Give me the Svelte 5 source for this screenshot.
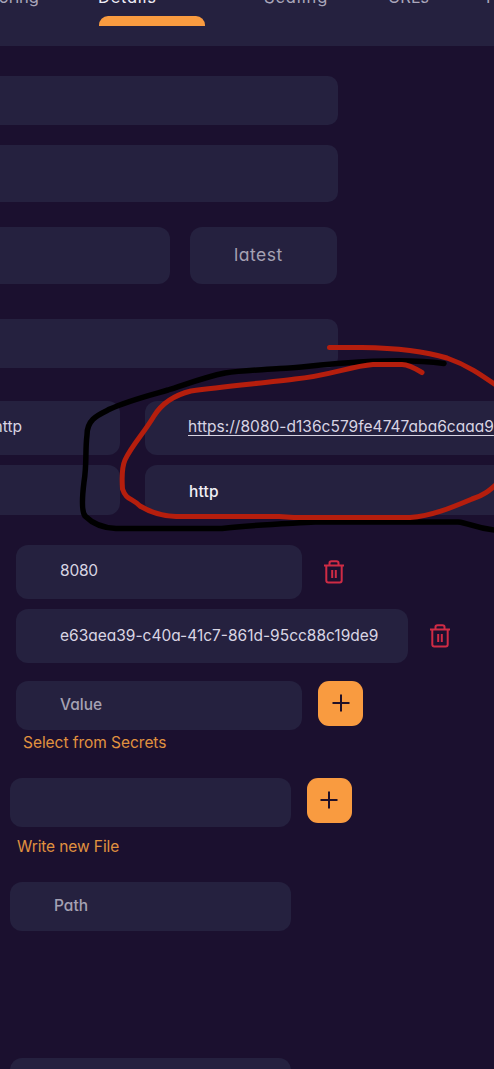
<script>
  const tabs = [
    { id: 'monitoring', label: 'Monitoring' },
    { id: 'details', label: 'Details' },
    { id: 'scaling', label: 'Scaling' },
    { id: 'urls', label: 'URLs' },
    { id: 'more', label: 'P' }
  ];
</script>

{#snippet trash()}
  <svg class="trash" viewBox="0 0 22 24" width="22" height="24" aria-hidden="true">
    <path d="M1 5.5H21M6.5 5V3Q6.5 1.300 8.5 1.300H13.5Q15.5 1.300 15.5 3V5M3.3 6V20.5Q3.3 22.5 5.3 22.5H16.7Q18.7 22.5 18.7 20.5V6M9.200 10V18M12.800 10V18" />
  </svg>
{/snippet}

{#snippet plus()}
  <button class="add" aria-label="Add">
    <svg viewBox="0 0 18 18" width="18" height="18"><path d="M9 .5V17.5M.5 9H17.5" /></svg>
  </button>
{/snippet}

<main>
  <header>
    <nav>
      {#each tabs as tab}
        <div class="tab {tab.id}"><span>{tab.label}</span></div>
      {/each}
    </nav>
    <div class="indicator"></div>
  </header>

  <div class="row name"><div class="field wide"></div></div>
  <div class="row kind"><div class="field wide"></div></div>
  <div class="row image">
    <div class="field repo"></div>
    <div class="field tag muted"><span>latest</span></div>
  </div>
  <div class="row command"><div class="field wide"></div></div>

  <div class="row url">
    <div class="field proto"><span>http</span></div>
    <div class="field link"><a href="#url">https://8080-d136c579fe4747aba6caaa9</a></div>
  </div>
  <div class="row scheme">
    <div class="field proto"></div>
    <div class="field link"><span class="http">http</span></div>
  </div>

  <div class="row port">
    <div class="field value"><span class="t-port">8080</span></div>
    {@render trash()}
  </div>
  <div class="row uuid">
    <div class="field long"><span>e63aea39-c40a-41c7-861d-95cc88c19de9</span></div>
    {@render trash()}
  </div>
  <div class="row new-value">
    <div class="field value muted"><span class="hint">Value</span></div>
    {@render plus()}
  </div>
  <div class="action secrets"><span>Select from Secrets</span></div>
  <div class="row file">
    <div class="field path"></div>
    {@render plus()}
  </div>
  <div class="action write"><span>Write new File</span></div>
  <div class="row file-path"><div class="field path muted"><span class="hint">Path</span></div></div>
  <div class="row last"><div class="field path"></div></div>

  <svg class="ink" viewBox="0 0 494 1069" width="494" height="1069" aria-hidden="true">
    <path class="black" d="M444 363.500C418 360 385 360 345 363C315 365 300 368 280 368.500C262 370 244 370 225 373C205 377 187 384 168 390C147 396 127 401 110 409C98 415 87 419 87 435C85 451 87 464 84 482C82 498 82 512 85 516C92 523 103 528 116 528.500H222C250 525 280 524 315 522H458C470 523 475 529 500 530.500" />
    <path class="red" d="M329.500 347.500H362C395 348 424 351 447 358C467 365 480 374 500 388" />
    <path class="red" d="M422 372.500C413 367 408 364.500 402 364.500H373C351 366 328 376 295 379C265 383 225 386 191 391C175 395 162 403 154 416C144 433 132 445 125 460C121 469 122 480 122.500 489C126 500 132 498 140 506C150 512 162 516 176 516.500H279L294 517.500H410C432 516 453 507 472 499C485 495 490 490 500 481" />
  </svg>
</main>

<style>
  :global(body) { margin: 0; background: #1b102f; }
  main {
    position: relative;
    width: 494px;
    height: 1069px;
    overflow: hidden;
    background: #1b102f;
    color: #d9d5e3;
    font: 15.5px/20px Inter, "Open Sans", sans-serif;
    font-feature-settings: "cv11" 1;
  }
  span, a { display: block; white-space: nowrap; }
  header { height: 45.500px; background: #25213f; overflow: hidden; }
  nav {
    display: grid;
    grid-template-columns: 98px 166px 124px 98px 1fr;
    height: 16px;
    font-size: 16.500px;
    color: #aaa6ba;
  }
  .tab { height: 16px; margin-top: -13px; }
  .monitoring { display: flex; justify-content: flex-end; padding-right: 59px; }
  .details { color: #f0edf6; letter-spacing: .75px; }
  .scaling { letter-spacing: .9px; }
  .urls { letter-spacing: 0; }
  .indicator { width: 105.500px; height: 9.500px; margin-left: 99px; border-radius: 9px 9px 0 0; background: #f99b40; }

  .row { display: flex; align-items: stretch; }
  .field { display: flex; align-items: center; flex: none; box-sizing: border-box; background: #25213f; border-radius: 12px; }
  .wide { width: 338px; border-radius: 0 10px 10px 0; }
  .muted { color: #a5a1b3; }
  .name { height: 49px; margin-top: 30px; }
  .kind { height: 57px; margin-top: 20px; }
  .image { height: 57px; margin-top: 25px; gap: 20px; }
  .repo { width: 170px; border-radius: 0 12px 12px 0; }
  .tag { width: 147px; padding: 0 0 1px 44px; font-size: 17.500px; letter-spacing: .5px; }
  .command { height: 49px; margin-top: 35.500px; }
  .url, .scheme { gap: 25px; }
  .url { height: 54px; margin-top: 32.500px; }
  .scheme { height: 50px; margin-top: 10px; }
  .proto { width: 120px; border-radius: 0 12px 12px 0; justify-content: flex-end; padding: 0 98px 1px 0; }
  .link { width: 361px; padding: 0 0 1px 43px; }
  .link a { color: #d8d4e3; letter-spacing: .03px; text-underline-offset: 3px; text-decoration-thickness: 1px; text-decoration-skip-ink: auto; }
  .http { color: #f1eff5; font-weight: 500; padding: 6px 0 0 1px; letter-spacing: .2px; }
  .port { height: 54px; margin-top: 30px; margin-left: 16px; }
  .uuid { height: 54px; margin-top: 10.500px; margin-left: 16px; }
  .value { width: 286px; padding: 0 0 1px 44px; }
  .t-port { letter-spacing: -.2px; }
  .long { width: 391.500px; padding: 0 0 1px 44px; }
  .trash { align-self: center; margin-left: 20.500px; fill: none; stroke: #cf2b45; stroke-width: 2; }
  .uuid .trash { margin-left: 21.500px; }
  .new-value { height: 49.500px; margin-top: 17.500px; margin-left: 16px; }
  .hint { font-weight: 500; padding-top: 1px; }
  .add { display: flex; align-items: center; justify-content: center; width: 45px; height: 45px; margin: 0 0 0 15.500px; padding: 0; border: 0; border-radius: 11px; background: #f99b40; }
  .new-value .add svg { margin-left: 1px; }
  .add svg { fill: none; stroke: #211027; stroke-width: 2; }
  .action { color: #e1923f; height: 20px; }
  .secrets { margin: 3px 0 0 23px; letter-spacing: -.04px; }
  .file { height: 49px; margin: 24.500px 0 0 10px; }
  .write { margin: 10.500px 0 0 17px; letter-spacing: -.1px; }
  .file-path { height: 49.500px; margin: 24.500px 0 0 10px; }
  .path { width: 281px; padding: 0 0 1px 44px; }
  .last { height: 50px; margin: 127px 0 0 10px; }
  .ink { position: absolute; inset: 0; fill: none; stroke-linecap: round; stroke-linejoin: round; }
  .black { stroke: #000; stroke-width: 5.500; }
  .red { stroke: #b51e0d; stroke-width: 5; }
</style>
